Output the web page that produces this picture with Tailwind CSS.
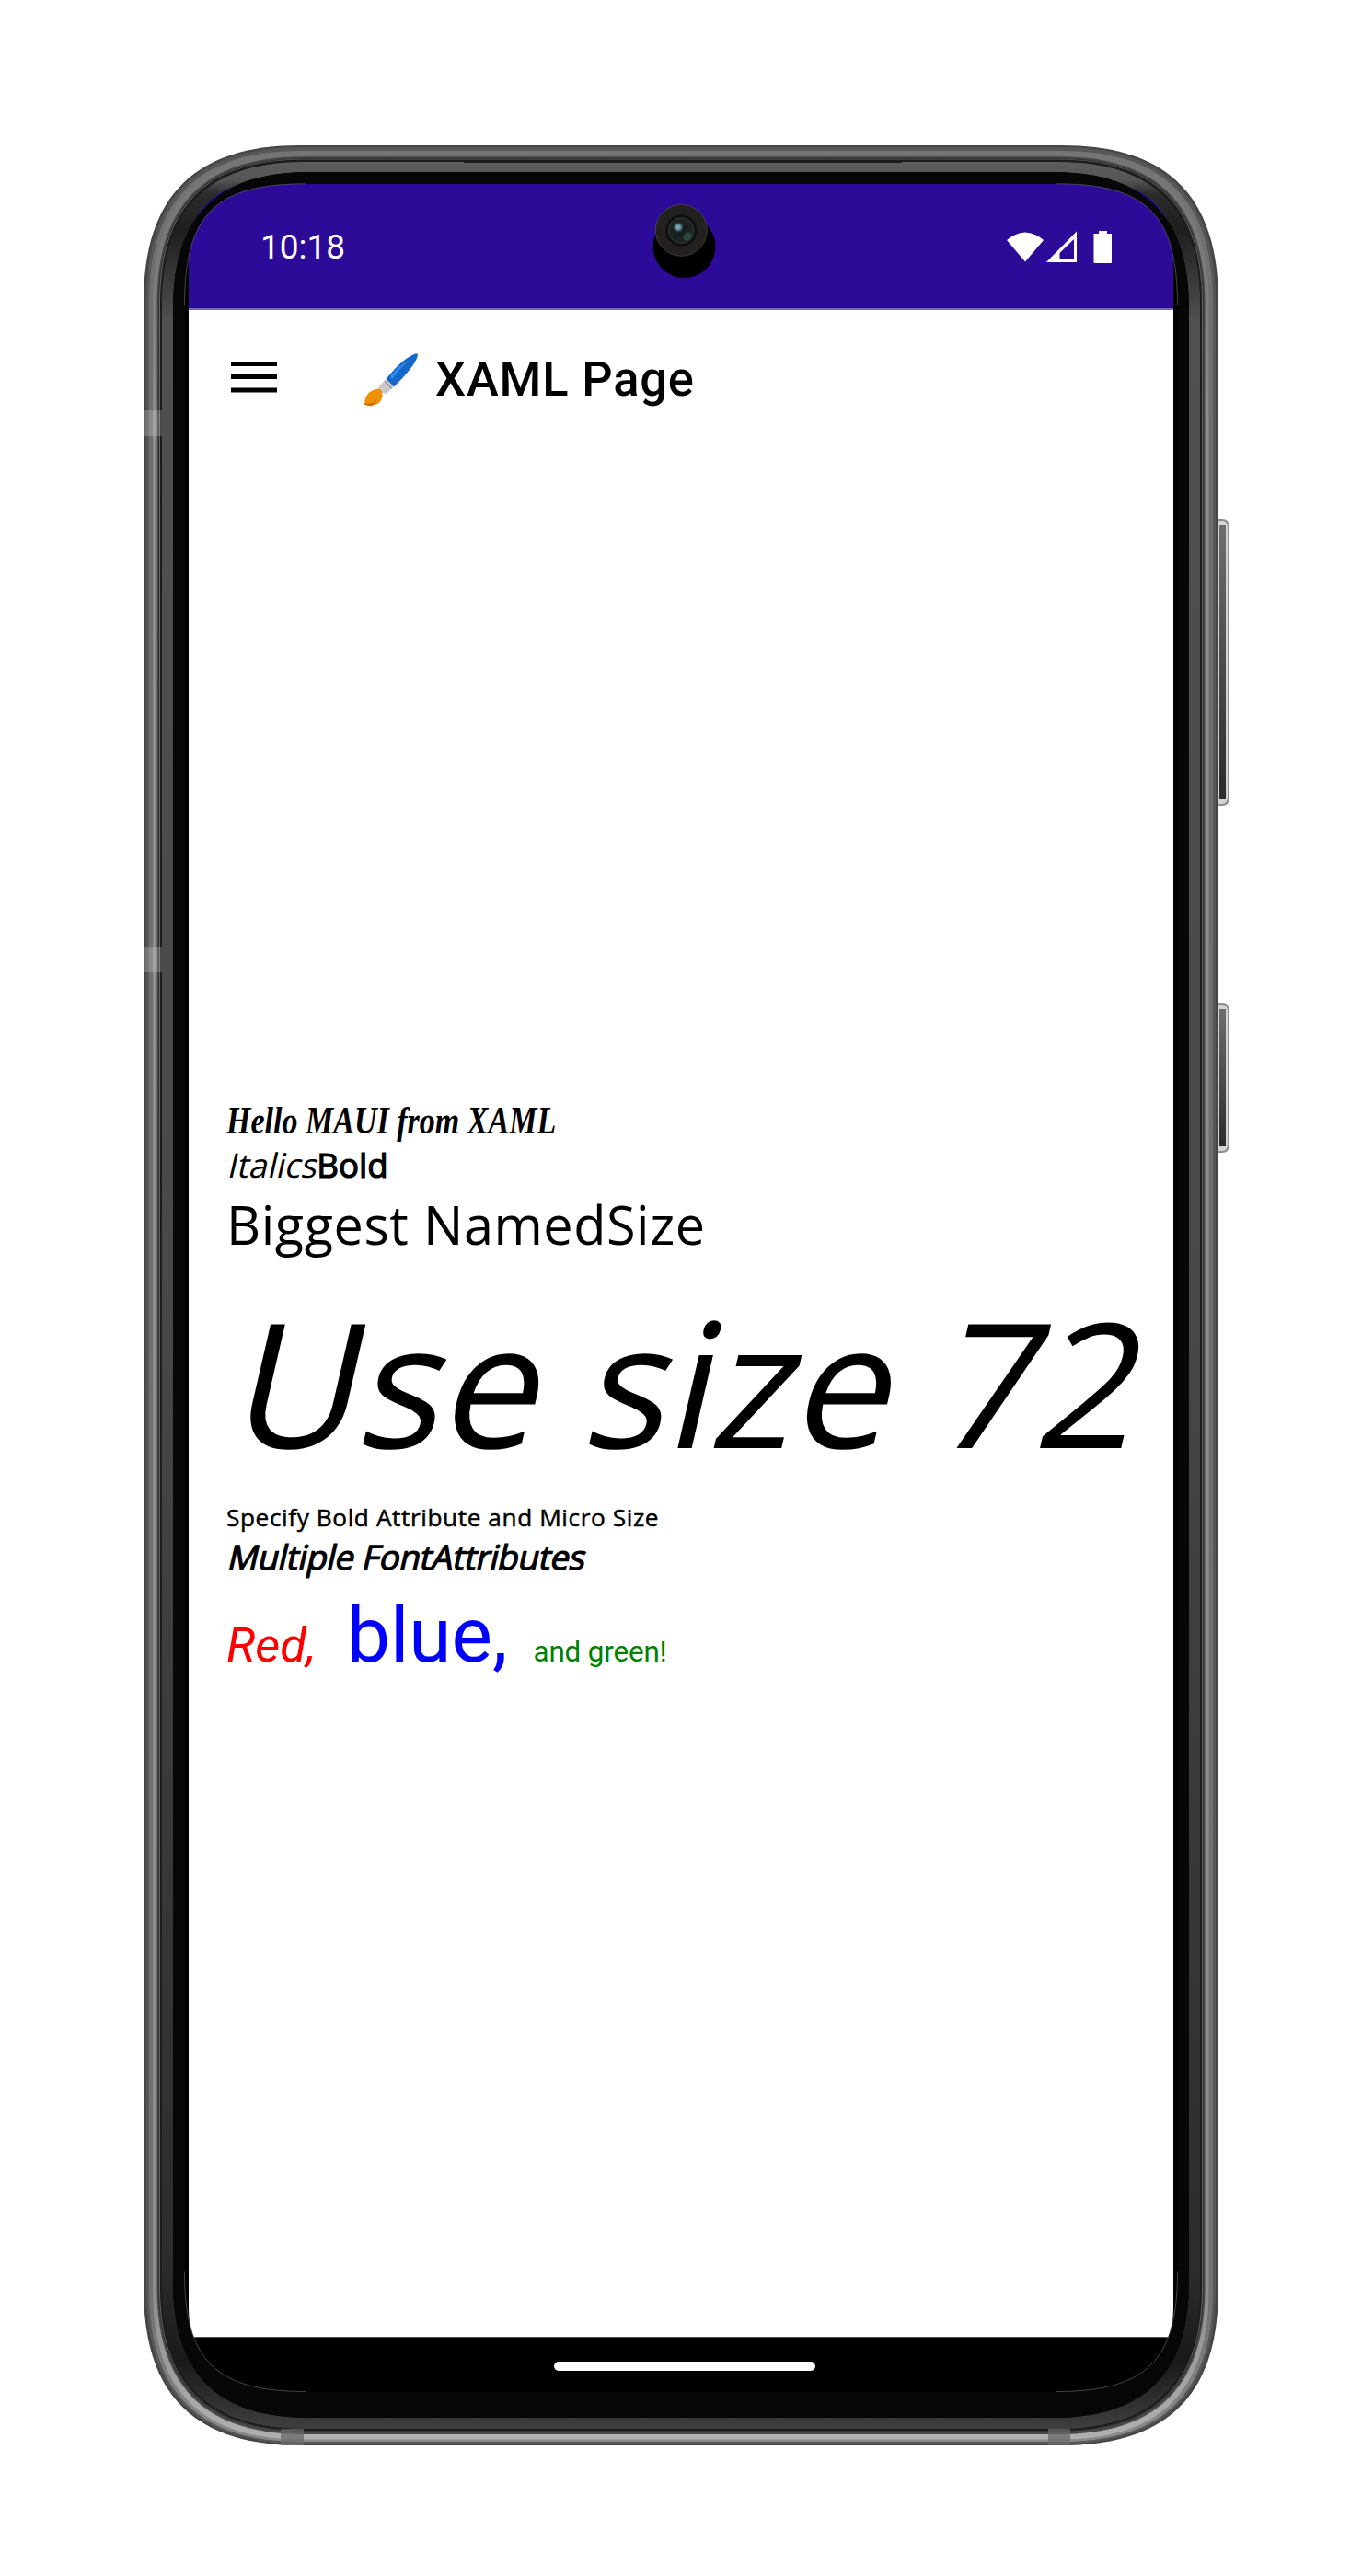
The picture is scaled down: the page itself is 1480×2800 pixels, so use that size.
<!DOCTYPE html>
<html lang="en">
<head>
<meta charset="utf-8">
<title>XAML Page</title>
<script src="https://cdn.jsdelivr.net/npm/@tailwindcss/browser@4"></script>
</head>
<body class="bg-white">
<div class="relative w-[1480px] h-[2800px] overflow-hidden bg-white">
  <!-- phone body -->
  <svg class="absolute inset-0" width="1480" height="2800" viewBox="0 0 1480 2800">
    <defs>
      <linearGradient id="rim" x1="0" y1="0" x2="0" y2="1"><stop offset="0" stop-color="#757575"/><stop offset=".08" stop-color="#6e6e6e"/><stop offset=".94" stop-color="#727272"/><stop offset="1" stop-color="#8a8a8a"/></linearGradient>
      <linearGradient id="shine" x1="0" y1="0" x2="0" y2="1"><stop offset="0" stop-color="#757575"/><stop offset=".06" stop-color="#7c7c7c"/><stop offset=".12" stop-color="#8e8e8e"/><stop offset=".94" stop-color="#8e8e8e"/><stop offset="1" stop-color="#b0b0b0"/></linearGradient>
      <linearGradient id="bezel" x1="0" y1="0" x2="0" y2="1"><stop offset="0" stop-color="#5c5c5c"/><stop offset=".008" stop-color="#555"/><stop offset=".014" stop-color="#2c2c2c"/><stop offset=".03" stop-color="#1e1e1e"/><stop offset=".07" stop-color="#505050"/><stop offset=".5" stop-color="#484848"/><stop offset=".93" stop-color="#2c2c2c"/><stop offset=".97" stop-color="#1a1a1a"/><stop offset="1" stop-color="#3e3e3e"/></linearGradient>
      <linearGradient id="key" x1="0" y1="0" x2="0" y2="1"><stop offset="0" stop-color="#6e6e6e"/><stop offset="1" stop-color="#2a2a2a"/></linearGradient>
      <radialGradient id="lens"><stop offset="0" stop-color="#151a1a"/><stop offset=".8" stop-color="#1c2322"/><stop offset="1" stop-color="#2b302f"/></radialGradient>
      <radialGradient id="glint"><stop offset="0" stop-color="#8fc3d3"/><stop offset=".5" stop-color="#557a86"/><stop offset="1" stop-color="#1a2224" stop-opacity="0"/></radialGradient>
    </defs>
    <!-- side keys -->
    <path d="M1323 564h5q8 0 8 9v294q0 9-8 9h-5z" fill="#8e8e8e"/>
    <path d="M1324 566h4q6 0 6 8v292q0 8-6 8h-4z" fill="#d4d4d4"/>
    <rect x="1325" y="571" width="7" height="298" fill="url(#key)"/>
    <path d="M1323 1090h5q8 0 8 9v145q0 9-8 9h-5z" fill="#8e8e8e"/>
    <path d="M1324 1092h4q6 0 6 8v143q0 8-6 8h-4z" fill="#d4d4d4"/>
    <rect x="1325" y="1097" width="7" height="149" fill="url(#key)"/>
    <g id="shell"></g>
  </svg>

  <!-- screen -->
  <div class="absolute left-[205px] top-[200px] w-[1070px] h-[2400px] flex flex-col bg-white text-black rounded-[90px]">
    <header class="h-[137px] shrink-0 bg-[#2b0b98] border-b-2 border-[#7a66be] rounded-t-[70px] flex items-center justify-between pl-[78px] pr-[64px]">
      <span class="font-['Roboto'] text-[37px] leading-none text-white pt-px">10:18</span>
      <svg class="mt-px" width="117" height="38" viewBox="0 0 117 38" fill="#fff">
        <path d="M0 12Q20-5 40 12L20 35.500z"/>
        <path fill-rule="evenodd" d="M43 36L76 2.500V36zM57.500 32.500H73V11L57.500 26z"/>
        <path d="M94.500 5H100V2h9v3h5v31q0 1-1 1H95.500q-1 0-1-1z"/>
      </svg>
    </header>
    <div class="h-[149px] shrink-0 flex items-center pl-[46px]">
      <svg class="-mt-1" width="50" height="36" viewBox="0 0 50 36" fill="#000"><path d="M0 1h50v5H0zM0 15h50v5H0zM0 29.500h50v5H0z"/></svg>
      <svg class="ml-[94px] mt-[3px]" width="60" height="60" viewBox="0 0 60 60">
        <path d="M24.500 29Q42 7 56 1.500Q60 .5 58.500 5Q54 17 33 37.500z" fill="#1668c8"/>
        <path d="M29 26Q41 12 50 8Q42 15 31 29z" fill="#2b8cf0"/>
        <path d="M24.500 29L33 37.500L25 45Q17 45 16 38z" fill="#c9c9c9"/>
        <path d="M23 31L30.500 39" stroke="#999" stroke-width="1.500"/>
        <path d="M16 39.500Q22 40 20 50Q17 60 0 56.500Q3 54 1 53Q4 41 16 39.500z" fill="#f09105"/>
        <path d="M0 55Q8 57 14 52Q12 59 6 58Q2 58 0 55z" fill="#cf6f05"/>
      </svg>
      <h1 class="ml-[18px] mt-[2px] font-['Roboto'] font-medium text-[52.400px] tracking-[.85px] leading-none whitespace-nowrap">XAML Page</h1>
    </div>
    <main class="grow pt-[714px] pl-[41px] font-['Open_Sans'] whitespace-nowrap">
      <p class="h-[36px] text-[42px] leading-[36px] font-['Liberation_Serif'] font-bold italic"><span class="inline-block origin-left scale-x-[.81]">Hello MAUI from XAML</span></p>
      <p class="h-[60px] text-[36.700px] leading-[60px] flex"><span class="origin-[0_44px] -skew-x-13">Italics</span><span class="ml-px [-webkit-text-stroke:1.200px_black]">Bold</span></p>
      <p class="h-[69px] text-[57.600px] leading-[69px] tracking-[.55px]">Biggest NamedSize</p>
      <p class="h-[271px] text-[188.600px] leading-[271px] tracking-[.4px] origin-[0_209px] -skew-x-13">Use size 72</p>
      <p class="h-[26px] text-[26.200px] leading-[26px] tracking-[.6px] [-webkit-text-stroke:.5px_black]">Specify Bold Attribute and Micro Size</p>
      <p class="h-[60px] text-[36.700px] leading-[60px] tracking-[-.32px] origin-[0_44px] -skew-x-13 [-webkit-text-stroke:1.200px_black]">Multiple FontAttributes</p>
      <p class="h-[110px] leading-[110px] font-['Roboto'] flex items-baseline"><span class="text-[52.400px] italic text-[#ff0000]">Red,</span><span class="ml-[34px] text-[83.800px] text-[#0000ff]">blue,</span><span class="ml-[28px] text-[31.400px] tracking-[-.15px] text-[#008000]">and green!</span></p>
    </main>
    <footer class="h-[60px] shrink-0 bg-black border-t border-[#555] rounded-b-[50px] flex justify-center pt-[26px] pl-[7px]"><div class="w-[284px] h-[10px] rounded-full bg-white"></div></footer>
  </div>

  <!-- corner mask and camera -->
  <svg class="absolute inset-0" width="1480" height="2800" viewBox="0 0 1480 2800">
    <path id="mask" fill="#070707" fill-rule="evenodd"/>
    <path fill="none" stroke="#555" stroke-width=".8" d="M200.500 2469.500C200.500 2566 234 2599.500 333 2599.500M1147 2599.500C1246 2599.500 1279.500 2566 1279.500 2469.500M200.500 332C200.500 233 234 199.800 333 199.800M1147 199.800C1246 199.800 1279.500 233 1279.500 332"/>
    <circle cx="743.500" cy="268" r="34" fill="#000"/>
    <circle cx="740.300" cy="250.300" r="28" fill="#22211f" stroke="#555" stroke-width=".6"/>
    <circle cx="740.300" cy="250.500" r="17" fill="#0e0e0e"/>
    <circle cx="740.300" cy="250.500" r="14.500" fill="url(#lens)"/>
    <ellipse cx="747" cy="257" rx="5" ry="4" fill="#2f5a50" opacity=".7" transform="rotate(-40 747 257)"/>
    <circle cx="737" cy="247" r="6.500" fill="url(#glint)"/>
  </svg>
</div>
<script>
  // rounded box with continuous-curvature corners
  function box(l, t, r, b, e, k) {
    const c = e * (1 - k);
    return `M${l} ${t+e}C${l} ${t+c} ${l+c} ${t} ${l+e} ${t}H${r-e}C${r-c} ${t} ${r} ${t+c} ${r} ${t+e}V${b-e}C${r} ${b-c} ${r-c} ${b} ${r-e} ${b}H${l+e}C${l+c} ${b} ${l} ${b-c} ${l} ${b-e}Z`;
  }
  const layers = [
    [156,158,1324,2658,170,'#464646'],
    [159,160,1321,2656,168,'#575757'],
    [162,164,1318,2654,165,'url(#rim)'],
    [166,167,1313.500,2651.500,162,'url(#shine)'],
    [170.500,170,1309.500,2646,160,'#484848'],
    [172,172,1308,2643,158,'#303030'],
    [173,173,1307,2642,157,'#666666'],
    [174,173.500,1306,2642,156,'#1c1c1c'],
    [176,176,1304,2640,155,'url(#bezel)'],
    [188,187,1292,2628,148,'#070707']
  ];
  document.getElementById('shell').innerHTML = layers.map(a => `<path d="${box(a[0],a[1],a[2],a[3],a[4],.675)}" fill="${a[5]}"/>`).join('') +
    '<rect x="504" y="174" width="476" height="3" fill="#1a1a1a"/><path d="M156 446h20v28h-20zM156 1029h20v28h-20z" fill="#fff" opacity=".2"/><path d="M305 2640h25v18h-25zM1139 2640h24v18h-24z" fill="#6a6a6a" opacity=".75"/>';
  const scr = box(200.500,199.500,1279.500,2599.500,130,.74);
  document.getElementById('shell').innerHTML += `<path d="${scr}" fill="#000"/>`;
  document.getElementById('mask').setAttribute('d', box(188,187,1292,2628,148,.675) + scr);
</script>
</body>
</html>
